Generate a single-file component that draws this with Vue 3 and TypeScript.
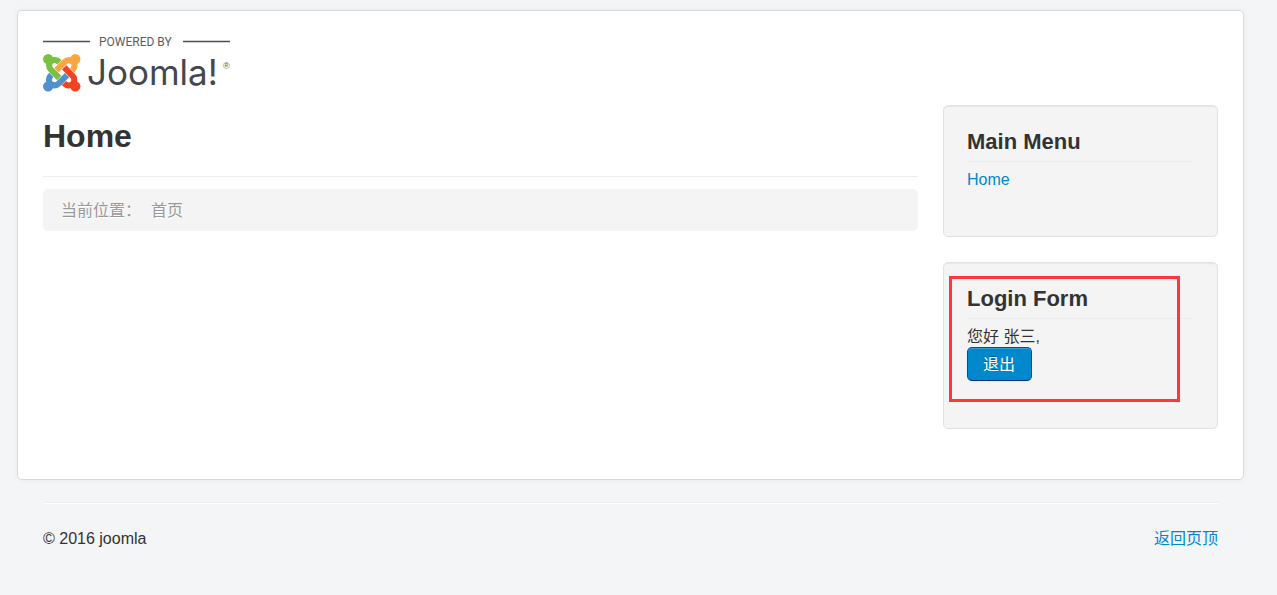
<script setup lang="ts">
interface MenuItem {
  label: string
  href: string
}

interface LogoArm {
  color: string
  angle: number
}

const siteName = 'joomla'
const year = 2016
const userName = '张三'

const menu: MenuItem[] = [{ label: 'Home', href: '#home' }]

// The four arms of the mark are one shape turned about its centre.
const arms: LogoArm[] = [
  { color: '#5091cd', angle: 0 },
  { color: '#7ac143', angle: 90 },
  { color: '#f9a541', angle: 180 },
  { color: '#f44321', angle: 270 },
]
</script>

<template>
  <div id="top" class="page">
    <div class="container">
      <header class="header">
        <a class="brand" href="#home" aria-label="Powered by Joomla!">
          <svg class="logo" width="188" height="57" viewBox="0 0 188 57" aria-hidden="true">
            <path d="M0 5.5H47M140 5.5H187" stroke="#4c4d52" stroke-width="1.4" />
            <text class="logo-powered" x="56" y="10">POWERED BY</text>
            <g transform="translate(0 18) scale(1.56)" fill="none" stroke-width="3.9">
              <g
                v-for="arm in arms"
                :key="arm.angle"
                :transform="`rotate(${arm.angle} 12 12)`"
                :stroke="arm.color"
              >
                <path d="M15.4 13.6L10.2 18.8C8.4 20.6 6.2 20.4 4.8 19C3.4 17.6 3.3 15.4 5.3 13.4" />
                <circle cx="3.3" cy="20.7" r="3.3" :fill="arm.color" stroke="none" />
              </g>
            </g>
            <text class="logo-word" x="44" y="49">Joomla!</text>
            <text class="logo-mark" x="180" y="33">®</text>
          </svg>
        </a>
      </header>

      <div class="columns">
        <main class="content">
          <div class="page-header">
            <h1>Home</h1>
          </div>
          <nav class="breadcrumb" aria-label="当前位置">
            <span>当前位置：</span>
            <span aria-current="page">首页</span>
          </nav>
        </main>

        <aside class="sidebar">
          <section class="well">
            <h3>Main Menu</h3>
            <ul class="menu">
              <li v-for="item in menu" :key="item.href">
                <a :href="item.href">{{ item.label }}</a>
              </li>
            </ul>
          </section>

          <section class="well">
            <h3>Login Form</h3>
            <form @submit.prevent>
              <div>您好 {{ userName }},</div>
              <button type="submit" class="btn">退出</button>
            </form>
            <div class="highlight"></div>
          </section>
        </aside>
      </div>
    </div>

    <footer class="footer">
      <p>© {{ year }} {{ siteName }}</p>
      <a href="#top">返回页顶</a>
    </footer>
  </div>
</template>

<style>
body {
  margin: 0;
  background: #f4f5f7;
}
</style>

<style scoped>
.page {
  box-sizing: border-box;
  min-height: 100vh;
  padding: 10px 33px 30px 17px;
  background: #f4f5f7;
  color: #333;
  font-family: "Liberation Sans", Arial, "Noto Sans CJK SC", sans-serif;
  font-size: 16px;
  line-height: 20px;
}

a {
  color: #08c;
  text-decoration: none;
}

h1,
h3,
p,
ul {
  margin: 0;
  padding: 0;
}

.container {
  padding: 25px 25px 50px;
  border: 1px solid #dadada;
  border-radius: 5px;
  background: #fff;
  box-shadow: 0 0 6px rgba(0, 0, 0, 0.05);
}

.header {
  margin-bottom: 12px;
}

.brand,
.logo {
  display: block;
  width: 188px;
}

.logo-powered {
  fill: #5c5d61;
  font-family: Roboto, sans-serif;
  font-size: 12px;
}

.logo-word {
  fill: #46474d;
  font-family: Inter, "DejaVu Sans", sans-serif;
  font-weight: 400;
  font-size: 35px;
}

.logo-mark {
  fill: #5c5d61;
  font-family: "Liberation Sans", sans-serif;
  font-size: 9px;
}

.columns {
  display: grid;
  grid-template-columns: minmax(0, 1fr) 275px;
  gap: 25px;
}

.page-header {
  padding: 11px 0 20px;
  border-bottom: 1px solid #eee;
}

h1 {
  font-size: 32px;
  line-height: 40px;
}

.breadcrumb {
  display: flex;
  gap: 10px;
  margin-top: 12px;
  padding: 12px 18px 10px;
  border-radius: 5px;
  background: #f4f4f4;
  color: #999;
  text-shadow: 0 1px 0 #fff;
}

.sidebar {
  display: flex;
  flex-direction: column;
  gap: 25px;
}

.well {
  position: relative;
  padding: 24px 24px 47px 23px;
  border: 1px solid #e3e3e3;
  border-radius: 5px;
  background: #f4f4f4;
  box-shadow: inset 0 1px 1px rgba(0, 0, 0, 0.05);
}

h3 {
  margin-bottom: 8px;
  padding-bottom: 8px;
  border-bottom: 1px solid #ececec;
  font-size: 22px;
  line-height: 23px;
}

.menu {
  margin-bottom: -1px;
  list-style: none;
}

.btn {
  display: block;
  padding: 7px 16px 5px 15px;
  border: 1px solid;
  border-color: #04c #04c #002a80;
  border-radius: 5px;
  background: #08c;
  color: #fff;
  font: inherit;
  text-shadow: 0 -1px 0 rgba(0, 0, 0, 0.25);
  box-shadow: inset 0 1px 0 rgba(255, 255, 255, 0.2), 0 1px 2px rgba(0, 0, 0, 0.05);
}

.highlight {
  position: absolute;
  inset: 13px 37px 26px 5px;
  border: 3px solid #fc3838;
  pointer-events: none;
}

.footer {
  display: flex;
  justify-content: space-between;
  margin: 22px 26px 0;
  padding-top: 26px;
  border-top: 1px solid #eee;
  box-shadow: inset 0 1px 0 #fff;
}
</style>
